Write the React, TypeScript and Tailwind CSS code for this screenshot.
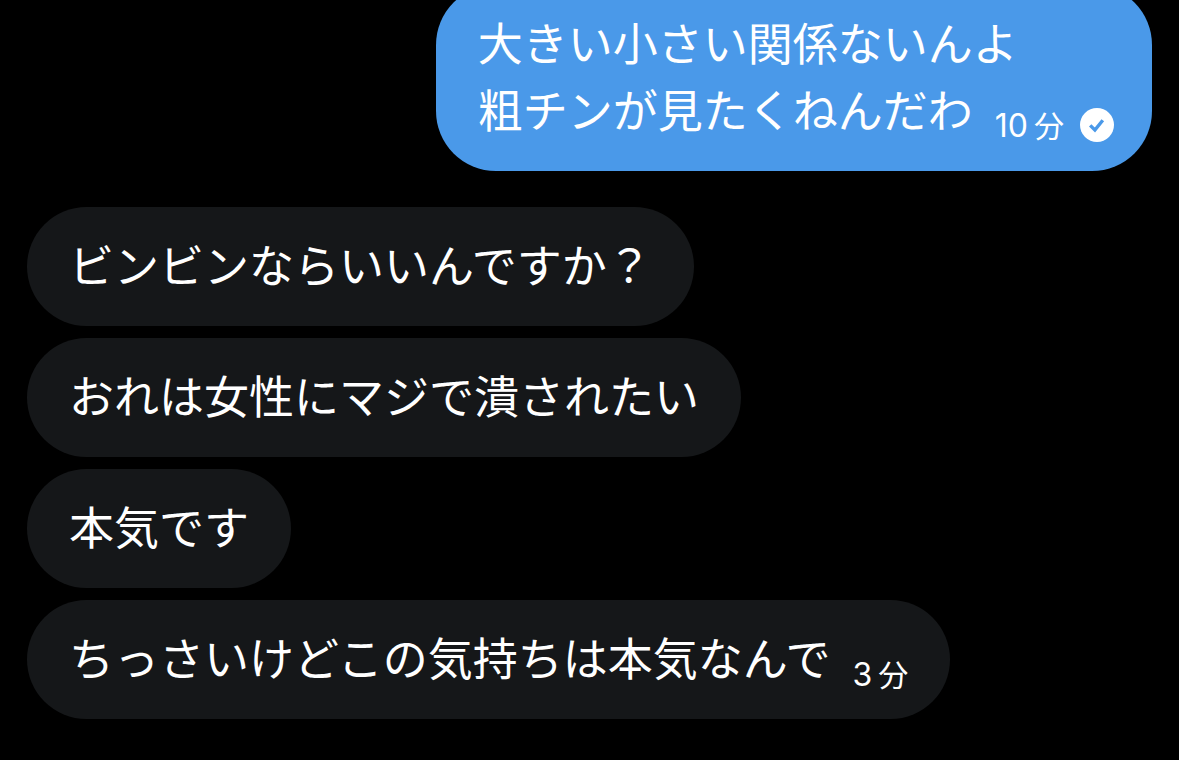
type Message = {
  id: number;
  lines: string[];
  outgoing?: boolean;
  time?: { value: string; unit: string };
};

const messages: Message[] = [
  {
    id: 1,
    lines: ["大きい小さい関係ないんよ", "粗チンが見たくねんだわ"],
    outgoing: true,
    time: { value: "10", unit: "分" },
  },
  { id: 2, lines: ["ビンビンならいいんですか？"] },
  { id: 3, lines: ["おれは女性にマジで潰されたい"] },
  { id: 4, lines: ["本気です"] },
  {
    id: 5,
    lines: ["ちっさいけどこの気持ちは本気なんで"],
    time: { value: "3", unit: "分" },
  },
];

function SentIcon() {
  return (
    <svg viewBox="0 0 34 34" className="size-[34px] shrink-0" role="img" aria-label="送信済み">
      <circle cx="17" cy="17" r="17" fill="#fff" />
      <path d="M10.2 17.4 L14.9 22 L22.8 12.2" fill="none" stroke="#4a99e9" strokeWidth="3.4" />
    </svg>
  );
}

function Time({ value, unit }: { value: string; unit: string }) {
  return (
    <time className="flex items-baseline gap-1.5 text-[32px] leading-[30px]">
      <span className="font-['Inter','Noto_Sans_CJK_JP',sans-serif]">{value}</span>
      <span className="text-[30px]">{unit}</span>
    </time>
  );
}

function Bubble({ message }: { message: Message }) {
  const { lines, outgoing, time } = message;
  const leading = lines.slice(0, -1);
  const last = lines[lines.length - 1];
  return (
    <li
      className={
        outgoing
          ? "mb-6 self-end rounded-[60px] bg-[#4a99e9] pt-[23px] pr-[38px] pb-[29px] pl-[42px] leading-[67px]"
          : "self-start rounded-[60px] bg-[#151719] px-[42px] pt-[23px] pb-[29px] leading-[67px]"
      }
    >
      {leading.map((line) => (
        <p key={line}>{line}</p>
      ))}
      <div className="flex items-end gap-[22px]">
        <p>{last}</p>
        {time && (
          <div className="flex items-center gap-4">
            <Time value={time.value} unit={time.unit} />
            {outgoing && <SentIcon />}
          </div>
        )}
      </div>
    </li>
  );
}

export default function App() {
  return (
    <main className="h-screen overflow-hidden bg-black font-['Noto_Sans_CJK_JP',sans-serif] text-[45px] text-white">
      <ul className="-mt-[15px] flex flex-col gap-3 px-[27px]">
        {messages.map((message) => (
          <Bubble key={message.id} message={message} />
        ))}
      </ul>
    </main>
  );
}
